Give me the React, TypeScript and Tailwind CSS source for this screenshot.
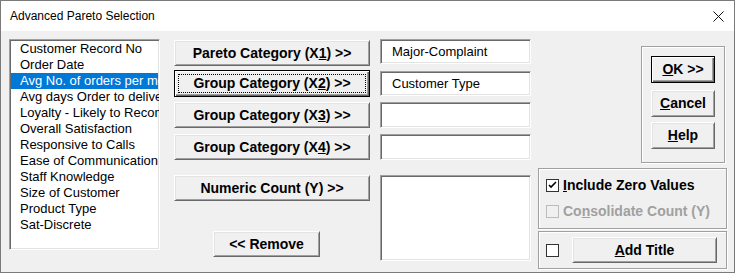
import React from 'react';

const items = [
  'Customer Record No',
  'Order Date',
  'Avg No. of orders per month',
  'Avg days Order to delivery',
  'Loyalty - Likely to Recommend',
  'Overall Satisfaction',
  'Responsive to Calls',
  'Ease of Communication',
  'Staff Knowledge',
  'Size of Customer',
  'Product Type',
  'Sat-Discrete',
];

const sunken =
  'border border-t-[#a0a0a0] border-l-[#a0a0a0] border-b-white border-r-white shadow-[inset_1px_1px_0_#696969,inset_-1px_-1px_0_#e3e3e3] bg-white';

const raised =
  'border border-t-white border-l-white border-b-[#696969] border-r-[#696969] shadow-[inset_1px_1px_0_#e3e3e3,inset_-1px_-1px_0_#a0a0a0] bg-[#f0f0f0]';

const strong =
  'border border-black shadow-[inset_1px_1px_0_#fff,inset_-1px_-1px_0_#696969,inset_-2px_-2px_0_#a0a0a0] bg-[#f0f0f0]';

const frame = 'border border-[#a0a0a0] shadow-[inset_1px_1px_0_#fff,1px_1px_0_#fff]';

function Btn({
  children,
  className = '',
  focused = false,
  isDefault = false,
}: {
  children: React.ReactNode;
  className?: string;
  focused?: boolean;
  isDefault?: boolean;
}) {
  const look = focused || isDefault ? strong : raised;
  return (
    <div
      className={`${look} ${className} flex items-center justify-center text-[14px] font-bold text-black ${
        focused ? 'outline-1 outline-dotted outline-black outline-offset-[-5px]' : ''
      }`}
    >
      <span>{children}</span>
    </div>
  );
}

function CheckBox({ checked = false, disabled = false }: { checked?: boolean; disabled?: boolean }) {
  return (
    <div
      className={`w-[13px] h-[13px] border flex items-center justify-center ${
        disabled ? 'border-[#bcbcbc] bg-[#f0f0f0]' : 'border-[#333333] bg-white'
      }`}
    >
      {checked && (
        <svg width="9" height="9" viewBox="0 0 9 9">
          <path d="M1 4 L3 6 L8 1" stroke="#000" strokeWidth="1.6" fill="none" />
        </svg>
      )}
    </div>
  );
}

export default function App() {
  return (
    <div className="w-[735px] h-[273px] border border-[#7a7a7a] bg-[#f0f0f0] flex flex-col overflow-hidden font-['Liberation_Sans',Arial,sans-serif] text-black">
      <div className="h-[30px] bg-white flex items-center justify-between pl-[9px] pr-[10px] text-[12px] shrink-0">
        <span>Advanced Pareto Selection</span>
        <svg width="11" height="11" viewBox="0 0 11 11">
          <path d="M0.5 0.5 L10.5 10.5 M10.5 0.5 L0.5 10.5" stroke="#111" strokeWidth="1" />
        </svg>
      </div>

      <div className="flex flex-1 pl-[8px] pt-[8px]">
        {/* variable list */}
        <div className={`${sunken} w-[151px] h-[211px] overflow-hidden py-[1px] px-[1px]`}>
          {items.map((item, i) => (
            <div
              key={item}
              className={`h-[16px] leading-[16px] text-[13px] whitespace-nowrap pl-[9px] ${
                i === 2 ? 'bg-[#0078d7] text-white' : ''
              }`}
            >
              {item}
            </div>
          ))}
        </div>

        {/* select buttons */}
        <div className="ml-[14px] w-[196px] flex flex-col">
          <Btn className="mt-[1px] h-[26px]">
            Pareto Category (X<u>1</u>) &gt;&gt;
          </Btn>
          <Btn className="mt-[4px] h-[27px]" focused>
            Group Category (X<u>2</u>) &gt;&gt;
          </Btn>
          <Btn className="mt-[5px] h-[26px]">
            Group Category (X<u>3</u>) &gt;&gt;
          </Btn>
          <Btn className="mt-[6px] h-[26px]">
            Group Category (X<u>4</u>) &gt;&gt;
          </Btn>
          <Btn className="mt-[15px] h-[26px]">Numeric Count (Y) &gt;&gt;</Btn>
          <Btn className="mt-[30px] ml-[39px] w-[107px] h-[26px]">&lt;&lt; Remove</Btn>
        </div>

        {/* chosen fields */}
        <div className="ml-[10px] w-[151px] flex flex-col text-[13px]">
          <div className={`${sunken} h-[25px] flex items-center pl-[11px]`}>Major-Complaint</div>
          <div className={`${sunken} mt-[7px] h-[25px] flex items-center pl-[11px]`}>Customer Type</div>
          <div className={`${sunken} mt-[6px] h-[26px]`} />
          <div className={`${sunken} mt-[6px] h-[26px]`} />
          <div className={`${sunken} mt-[15px] h-[86px]`} />
        </div>

        {/* actions and options */}
        <div className="ml-[7px] w-[189px] flex flex-col">
          <div className={`${frame} ml-[103px] mt-[7px] w-[84px] h-[117px] flex flex-col pl-[9px] pt-[9px]`}>
            <Btn className="w-[64px] h-[27px]" isDefault>
              <u>O</u>K &gt;&gt;
            </Btn>
            <Btn className="mt-[7px] w-[64px] h-[27px]">
              <u>C</u>ancel
            </Btn>
            <Btn className="mt-[5px] w-[64px] h-[27px]">
              <u>H</u>elp
            </Btn>
          </div>

          <div className={`${frame} mt-[5px] h-[61px] flex flex-col pl-[7px] pt-[10px] text-[14px] font-bold`}>
            <div className="flex items-center gap-[4px] h-[13px]">
              <CheckBox checked />
              <span>
                <u>I</u>nclude Zero Values
              </span>
            </div>
            <div className="flex items-center gap-[4px] h-[13px] mt-[13px] text-[#a0a0a0]">
              <CheckBox disabled />
              <span>
                Co<u>n</u>solidate Count (Y)
              </span>
            </div>
          </div>

          <div className={`${frame} mt-[2px] h-[38px] flex items-center pl-[7px]`}>
            <CheckBox />
            <Btn className="ml-[13px] w-[145px] h-[26px]">
              <u>A</u>dd Title
            </Btn>
          </div>
        </div>
      </div>
    </div>
  );
}
